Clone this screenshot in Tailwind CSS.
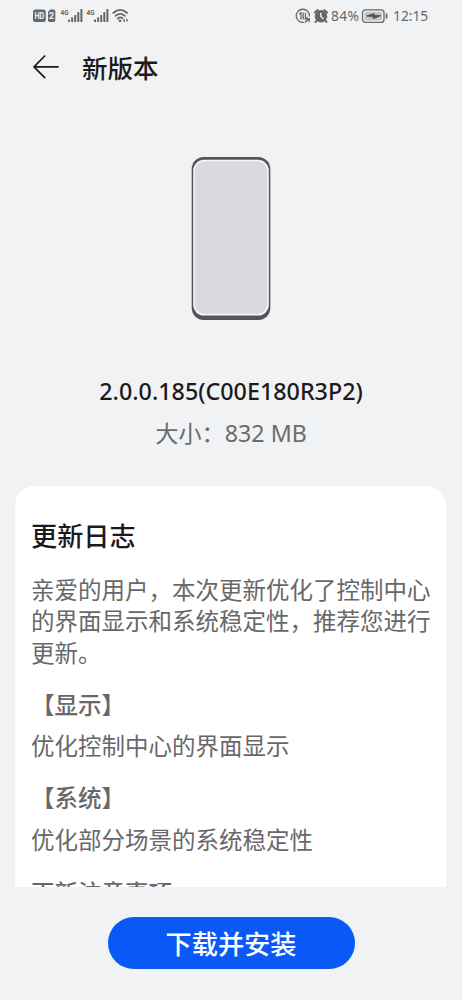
<!DOCTYPE html>
<html lang="zh-CN">
<head>
<meta charset="utf-8">
<title>新版本</title>
<script src="https://cdn.jsdelivr.net/npm/@tailwindcss/browser@4"></script>
</head>
<body class="bg-[#f1f2f4]">
<div class="w-[462px] h-[1000px] overflow-hidden flex flex-col bg-[#f1f2f4] text-[#1b1b1d] font-['Noto_Sans','Noto_Sans_CJK_SC',sans-serif]">
  <div class="h-8 shrink-0 flex items-center justify-between pl-[33px] pr-[33px] text-[#66676a]">
    <svg class="w-[97px] h-8" viewBox="0 0 97 32" fill="currentColor">
      <rect x="0" y="9.500" width="12.800" height="12.500" rx="2.500"/>
      <text x="1.400" y="19" font-family="Roboto, sans-serif" font-size="9" font-weight="700" fill="#f1f2f4" textLength="10" lengthAdjust="spacingAndGlyphs">HD</text>
      <path d="M15 12 17.200 9.500h3.300q1.800 0 1.800 1.800v8.900q0 1.800-1.800 1.800h-3.700q-1.800 0-1.800-1.800z"/>
      <text x="18.600" y="19.300" font-family="Roboto, sans-serif" font-size="9.500" font-weight="700" fill="#f1f2f4" text-anchor="middle">2</text>
      <g id="signal">
        <text x="27.600" y="15" font-family="Roboto, sans-serif" font-size="8" font-weight="700" textLength="8" lengthAdjust="spacingAndGlyphs">4G</text>
        <rect x="35" y="19.500" width="2" height="2.500" rx=".6"/>
        <rect x="38.100" y="17.300" width="2" height="4.700" rx=".6"/>
        <rect x="41.200" y="15" width="2" height="7" rx=".6"/>
        <rect x="44.300" y="12" width="2" height="10" rx=".6"/>
        <rect x="47.400" y="9" width="2" height="13" rx=".6"/>
      </g>
      <use href="#signal" x="26"/>
      <g fill="none" stroke="currentColor" stroke-width="1.800" stroke-linecap="round">
        <path d="M80.300 13Q87.200 6.700 94.100 13"/>
        <path d="M82.500 15.900Q87.200 11.800 91.900 15.900"/>
        <path d="M84.700 18.600Q87.200 16.400 89.500 18.300"/>
      </g>
      <circle cx="87" cy="20.800" r="1.400"/>
      <path d="M91.800 18.500v4l-2-2zM93.400 18.300v4l2-2z"/>
    </svg>
    <div class="flex items-center">
      <svg class="w-[36px] h-8" viewBox="0 0 36 32" fill="none" stroke="currentColor">
        <path d="M9.200 22.300A6.600 6.600 0 1 1 14.400 16.500M10 22.500l4.200-3.700M10.500 18.900l3.800-.2-.2 3.300" stroke-width="1.300"/>
        <path d="M4.200 14.200l1.800-1.500v6.800M8.200 12.500v7M10.400 12.700v6.600l2-2" stroke-width="1.300"/>
        <circle cx="26" cy="16.300" r="6.200" fill="currentColor" stroke="none"/>
        <path d="M19.800 12.600l3-2.500M32.200 12.600l-3-2.500M21.800 20.500l-1.400 1.600M30.200 20.500l1.400 1.600" stroke-width="1.900" stroke-linecap="round"/>
        <path d="M25.800 12.800v3.700l2.700 2.200" stroke="#f1f2f4" stroke-width="1.400"/>
      </svg>
      <span class="w-[30px] text-[13.800px] tracking-[0.300px] leading-8 whitespace-nowrap">84%</span>
      <svg class="w-[28px] h-8" viewBox="0 0 28 32" fill="none">
        <rect x="1.500" y="9.800" width="21.500" height="12.600" rx="3" stroke="currentColor" stroke-width="1.300"/>
        <rect x="3.500" y="11.800" width="17.500" height="8.600" rx="1" fill="#c3c4c6"/>
        <path d="M5.500 16l7.500-2.500v1.700l6.800.5-7.500 3v-1.900z" fill="#4f5053" stroke="#4f5053" stroke-width=".8"/>
        <path d="M25.500 13.500v5" stroke="currentColor" stroke-width="1.700"/>
      </svg>
      <span class="w-[40px] pl-[4px] text-[13.800px] leading-8 whitespace-nowrap">12:15</span>
    </div>
  </div>

  <header class="h-[70px] shrink-0 flex items-center pl-8 gap-[22px]">
    <svg class="w-7 h-7" viewBox="0 0 28 28" fill="none" stroke="#1b1b1d" stroke-width="1.700" stroke-linecap="round" stroke-linejoin="round"><path d="M26 13.800H2M12.700 3L2 13.800l10.700 10.800"/></svg>
    <h1 class="pt-px text-[25.500px] leading-[36px] font-medium">新版本</h1>
  </header>

  <div class="h-[384px] shrink-0 flex flex-col items-center pt-[54px]">
    <svg class="w-[80px] h-[165px]" viewBox="0 0 80 165">
      <rect x=".700" y="1" width="78.600" height="163" rx="12" fill="#54555b"/>
      <rect x="2.200" y="3.800" width="75.600" height="155.800" rx="11" fill="#f6f7f9"/>
      <rect x="3.800" y="5.300" width="72.400" height="152.500" rx="9.500" fill="#d8dade"/>
    </svg>
    <div class="mt-[53px] h-[34px] leading-[34px] text-[23.300px] font-medium whitespace-nowrap">2.0.0.185(C00E180R3P2)</div>
    <div class="mt-[8px] h-[34px] leading-[34px] text-[23.200px] text-[#6b6c6e] whitespace-nowrap">大小：832 MB</div>
  </div>

  <main class="ml-[15px] mr-4 h-[401px] shrink-0 overflow-hidden rounded-t-[20px] bg-white pl-4 text-[23.500px] leading-[31.300px] text-[#68686a] whitespace-nowrap">
    <h2 class="mt-[32px] h-9 leading-9 text-[26.200px] font-medium text-[#1b1b1d]">更新日志</h2>
    <p class="mt-[21px]">亲爱的用户，本次更新优化了控制中心<br>的界面显示和系统稳定性，推荐您进行<br>更新。</p>
    <h3 class="mt-[21px] font-medium">【显示】</h3>
    <p class="mt-[10px]">优化控制中心的界面显示</p>
    <h3 class="mt-[21px] font-medium">【系统】</h3>
    <p class="mt-[10px]">优化部分场景的系统稳定性</p>
    <h3 class="mt-[22px] font-medium">更新注意事项</h3>
  </main>

  <footer class="flex-1 pt-[30px] flex justify-center items-start">
    <button class="w-[247px] h-[52px] rounded-full bg-[#0a59f7] text-white text-[26.200px] leading-[54px] font-medium">下载并安装</button>
  </footer>
</div>
</body>
</html>
